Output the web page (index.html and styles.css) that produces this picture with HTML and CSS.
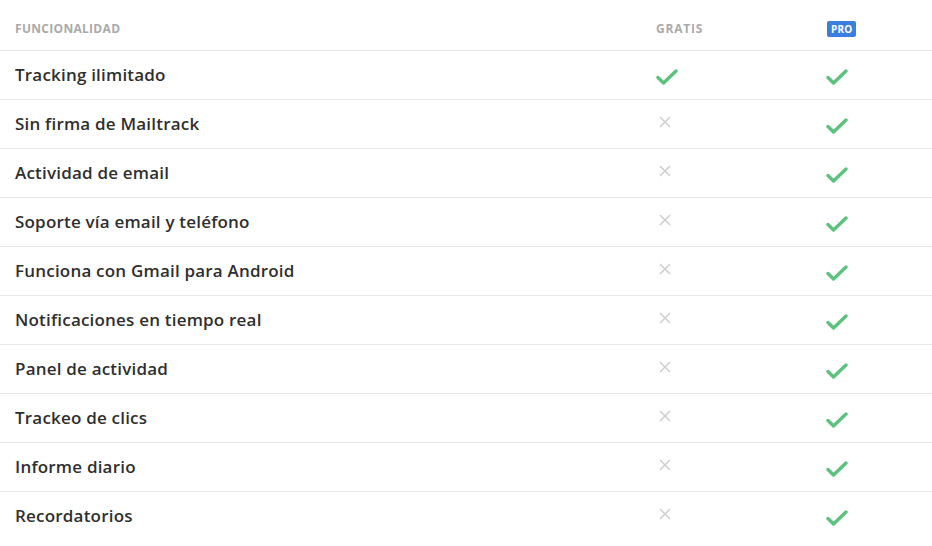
FILE: index.html
```html
<!DOCTYPE html>
<html lang="es">
<head>
<meta charset="utf-8">
<link rel="stylesheet" href="styles.css">
</head>
<body>
<div class="table">
  <div class="row head">
    <div class="cell name">FUNCIONALIDAD</div>
    <div class="cell plan">GRATIS</div>
    <div class="cell"><span class="badge">PRO</span></div>
  </div>
  <div class="row"><div class="cell name">Tracking ilimitado</div><div class="cell"><svg class="check" viewBox="0 0 22 16"><path d="M2 8.5l5.5 5.5L20 2"/></svg></div><div class="cell"><svg class="check" viewBox="0 0 22 16"><path d="M2 8.5l5.5 5.5L20 2"/></svg></div></div>
  <div class="row"><div class="cell name">Sin firma de Mailtrack</div><div class="cell"><svg class="cross" viewBox="0 0 12 12"><path d="M1 1l10 10M11 1L1 11"/></svg></div><div class="cell"><svg class="check" viewBox="0 0 22 16"><path d="M2 8.5l5.5 5.5L20 2"/></svg></div></div>
  <div class="row"><div class="cell name">Actividad de email</div><div class="cell"><svg class="cross" viewBox="0 0 12 12"><path d="M1 1l10 10M11 1L1 11"/></svg></div><div class="cell"><svg class="check" viewBox="0 0 22 16"><path d="M2 8.5l5.5 5.5L20 2"/></svg></div></div>
  <div class="row"><div class="cell name">Soporte vía email y teléfono</div><div class="cell"><svg class="cross" viewBox="0 0 12 12"><path d="M1 1l10 10M11 1L1 11"/></svg></div><div class="cell"><svg class="check" viewBox="0 0 22 16"><path d="M2 8.5l5.5 5.5L20 2"/></svg></div></div>
  <div class="row"><div class="cell name">Funciona con Gmail para Android</div><div class="cell"><svg class="cross" viewBox="0 0 12 12"><path d="M1 1l10 10M11 1L1 11"/></svg></div><div class="cell"><svg class="check" viewBox="0 0 22 16"><path d="M2 8.5l5.5 5.5L20 2"/></svg></div></div>
  <div class="row"><div class="cell name">Notificaciones en tiempo real</div><div class="cell"><svg class="cross" viewBox="0 0 12 12"><path d="M1 1l10 10M11 1L1 11"/></svg></div><div class="cell"><svg class="check" viewBox="0 0 22 16"><path d="M2 8.5l5.5 5.5L20 2"/></svg></div></div>
  <div class="row"><div class="cell name">Panel de actividad</div><div class="cell"><svg class="cross" viewBox="0 0 12 12"><path d="M1 1l10 10M11 1L1 11"/></svg></div><div class="cell"><svg class="check" viewBox="0 0 22 16"><path d="M2 8.5l5.5 5.5L20 2"/></svg></div></div>
  <div class="row"><div class="cell name">Trackeo de clics</div><div class="cell"><svg class="cross" viewBox="0 0 12 12"><path d="M1 1l10 10M11 1L1 11"/></svg></div><div class="cell"><svg class="check" viewBox="0 0 22 16"><path d="M2 8.5l5.5 5.5L20 2"/></svg></div></div>
  <div class="row"><div class="cell name">Informe diario</div><div class="cell"><svg class="cross" viewBox="0 0 12 12"><path d="M1 1l10 10M11 1L1 11"/></svg></div><div class="cell"><svg class="check" viewBox="0 0 22 16"><path d="M2 8.5l5.5 5.5L20 2"/></svg></div></div>
  <div class="row last"><div class="cell name">Recordatorios</div><div class="cell"><svg class="cross" viewBox="0 0 12 12"><path d="M1 1l10 10M11 1L1 11"/></svg></div><div class="cell"><svg class="check" viewBox="0 0 22 16"><path d="M2 8.5l5.5 5.5L20 2"/></svg></div></div>
</div>
</body>
</html>
```
FILE: styles.css
```css
html, body {
  margin: 0;
  padding: 0;
  background: #fff;
}
body {
  font-family: "Open Sans", Lato, sans-serif;
  color: #333;
}
.table {
  width: 932px;
}
.row {
  display: grid;
  grid-template-columns: 656px 170px 1fr;
  height: 48px;
  border-bottom: 1px solid #e6e6e6;
  align-items: center;
}
.row.head {
  height: 50px;
  align-items: start;
}
.row.last {
  border-bottom: none;
}
.cell {
  display: flex;
  align-items: center;
}
.name {
  padding-left: 15px;
  font-size: 17px;
  font-weight: 600;
  letter-spacing: 0.2px;
  color: #2f2f2f;
  margin-top: -1px;
}
.head .cell {
  padding-top: 20px;
  font-size: 12px;
  font-weight: 700;
  letter-spacing: 0.3px;
  color: #aaa;
  height: 16px;
  margin-top: 0;
}
.head .plan {
  letter-spacing: 0.8px;
}
.badge {
  display: inline-block;
  background: #3a7ee0;
  color: #fff;
  font-size: 10px;
  font-weight: 700;
  letter-spacing: 0.2px;
  line-height: 16px;
  padding: 0 4px;
  border-radius: 2px;
  margin-left: 1px;
  margin-top: 2px;
}
.check {
  width: 22px;
  height: 16px;
  margin-top: 4px;
}
.check path {
  fill: none;
  stroke: #5cc27e;
  stroke-width: 3.4;
  stroke-linecap: round;
  stroke-linejoin: round;
}
.cross {
  width: 12px;
  height: 12px;
  margin-left: 3px;
  margin-top: -4px;
}
.cross path {
  fill: none;
  stroke: #cfcfcf;
  stroke-width: 1.6;
}
```
